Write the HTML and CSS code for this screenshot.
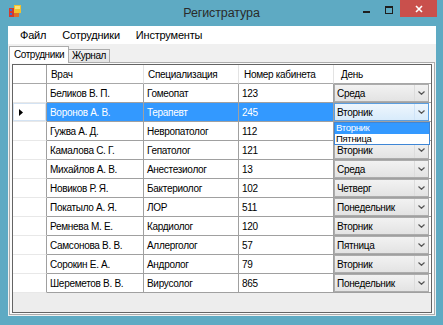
FILE: index.html
```html
<!DOCTYPE html>
<html lang="ru">
<head>
<meta charset="utf-8">
<title>Регистратура</title>
<link rel="stylesheet" href="styles.css">
</head>
<body>
<div class="window">
  <div class="titlebar">
    <div class="tb-left">
      <svg class="app-icon" width="12" height="12" viewBox="0 0 12 12">
        <rect x="0" y="3" width="6" height="9" fill="#d43a2f"/>
        <rect x="1" y="4" width="2" height="2" fill="#3a6fd8"/>
        <rect x="1" y="8" width="2" height="2" fill="#3a6fd8"/>
        <rect x="5" y="0" width="7" height="8" fill="#f2c12e"/>
        <rect x="6" y="1" width="5" height="3" fill="#fbe27a"/>
        <rect x="5" y="8" width="5" height="4" fill="#e0702a"/>
      </svg>
    </div>
    <div class="title">Регистратура</div>
    <div class="controls">
      <div class="btn-min"></div>
      <div class="btn-max"></div>
      <div class="btn-close">
        <svg width="8" height="8" viewBox="0 0 8 8"><path d="M1 1L7 7M7 1L1 7" stroke="#fff" stroke-width="1.6"/></svg>
      </div>
    </div>
  </div>
  <div class="client">
    <div class="menubar">
      <span class="menu-item">Файл</span>
      <span class="menu-item">Сотрудники</span>
      <span class="menu-item">Инструменты</span>
    </div>
    <div class="tabstrip">
      <div class="tab tab-active">Сотрудники</div>
      <div class="tab">Журнал</div>
    </div>
    <div class="tabpanel">
      <div class="grid">
        <div class="row hdr">
          <div class="c rh"></div>
          <div class="c c1">Врач</div>
          <div class="c c2">Специализация</div>
          <div class="c c3">Номер кабинета</div>
          <div class="c c4 hday">День</div>
        </div>

        <div class="row">
          <div class="c rh"></div>
          <div class="c c1">Беликов В. П.</div>
          <div class="c c2">Гомеопат</div>
          <div class="c c3">123</div>
          <div class="c c4"><div class="combo"><span class="ctext">Среда</span><span class="cbtn"><svg width="7" height="4" viewBox="0 0 7 4"><path d="M0.5 0.5L3.5 3.3L6.5 0.5" fill="none" stroke="#555" stroke-width="1.2"/></svg></span></div></div>
        </div>

        <div class="row sel">
          <div class="c rh rh-cur"><svg width="4" height="7" viewBox="0 0 4 7"><path d="M0 0L4 3.5L0 7Z" fill="#000"/></svg></div>
          <div class="c c1">Воронов А. В.</div>
          <div class="c c2">Терапевт</div>
          <div class="c c3">245</div>
          <div class="c c4"><div class="combo combo-active"><span class="ctext">Вторник</span><span class="cbtn"><svg width="7" height="4" viewBox="0 0 7 4"><path d="M0.5 0.5L3.5 3.3L6.5 0.5" fill="none" stroke="#555" stroke-width="1.2"/></svg></span></div></div>
        </div>

        <div class="row">
          <div class="c rh"></div>
          <div class="c c1">Гужва А. Д.</div>
          <div class="c c2">Невропатолог</div>
          <div class="c c3">112</div>
          <div class="c c4"><div class="combo"><span class="cbtn cbtn-end"><svg width="7" height="4" viewBox="0 0 7 4"><path d="M0.5 0.5L3.5 3.3L6.5 0.5" fill="none" stroke="#555" stroke-width="1.2"/></svg></span></div></div>
        </div>

        <div class="row">
          <div class="c rh"></div>
          <div class="c c1">Камалова С. Г.</div>
          <div class="c c2">Гепатолог</div>
          <div class="c c3">121</div>
          <div class="c c4"><div class="combo"><span class="ctext">Вторник</span><span class="cbtn"><svg width="7" height="4" viewBox="0 0 7 4"><path d="M0.5 0.5L3.5 3.3L6.5 0.5" fill="none" stroke="#555" stroke-width="1.2"/></svg></span></div></div>
        </div>

        <div class="row">
          <div class="c rh"></div>
          <div class="c c1">Михайлов А. В.</div>
          <div class="c c2">Анестезиолог</div>
          <div class="c c3">13</div>
          <div class="c c4"><div class="combo"><span class="ctext">Среда</span><span class="cbtn"><svg width="7" height="4" viewBox="0 0 7 4"><path d="M0.5 0.5L3.5 3.3L6.5 0.5" fill="none" stroke="#555" stroke-width="1.2"/></svg></span></div></div>
        </div>

        <div class="row">
          <div class="c rh"></div>
          <div class="c c1">Новиков Р. Я.</div>
          <div class="c c2">Бактериолог</div>
          <div class="c c3">102</div>
          <div class="c c4"><div class="combo"><span class="ctext">Четверг</span><span class="cbtn"><svg width="7" height="4" viewBox="0 0 7 4"><path d="M0.5 0.5L3.5 3.3L6.5 0.5" fill="none" stroke="#555" stroke-width="1.2"/></svg></span></div></div>
        </div>

        <div class="row">
          <div class="c rh"></div>
          <div class="c c1">Покатыло А. Я.</div>
          <div class="c c2">ЛОР</div>
          <div class="c c3">511</div>
          <div class="c c4"><div class="combo"><span class="ctext">Понедельник</span><span class="cbtn"><svg width="7" height="4" viewBox="0 0 7 4"><path d="M0.5 0.5L3.5 3.3L6.5 0.5" fill="none" stroke="#555" stroke-width="1.2"/></svg></span></div></div>
        </div>

        <div class="row">
          <div class="c rh"></div>
          <div class="c c1">Ремнева М. Е.</div>
          <div class="c c2">Кардиолог</div>
          <div class="c c3">120</div>
          <div class="c c4"><div class="combo"><span class="ctext">Вторник</span><span class="cbtn"><svg width="7" height="4" viewBox="0 0 7 4"><path d="M0.5 0.5L3.5 3.3L6.5 0.5" fill="none" stroke="#555" stroke-width="1.2"/></svg></span></div></div>
        </div>

        <div class="row">
          <div class="c rh"></div>
          <div class="c c1">Самсонова В. В.</div>
          <div class="c c2">Аллерголог</div>
          <div class="c c3">57</div>
          <div class="c c4"><div class="combo"><span class="ctext">Пятница</span><span class="cbtn"><svg width="7" height="4" viewBox="0 0 7 4"><path d="M0.5 0.5L3.5 3.3L6.5 0.5" fill="none" stroke="#555" stroke-width="1.2"/></svg></span></div></div>
        </div>

        <div class="row">
          <div class="c rh"></div>
          <div class="c c1">Сорокин Е. А.</div>
          <div class="c c2">Андролог</div>
          <div class="c c3">79</div>
          <div class="c c4"><div class="combo"><span class="ctext">Вторник</span><span class="cbtn"><svg width="7" height="4" viewBox="0 0 7 4"><path d="M0.5 0.5L3.5 3.3L6.5 0.5" fill="none" stroke="#555" stroke-width="1.2"/></svg></span></div></div>
        </div>

        <div class="row">
          <div class="c rh"></div>
          <div class="c c1">Шереметов В. В.</div>
          <div class="c c2">Вирусолог</div>
          <div class="c c3">865</div>
          <div class="c c4"><div class="combo"><span class="ctext">Понедельник</span><span class="cbtn"><svg width="7" height="4" viewBox="0 0 7 4"><path d="M0.5 0.5L3.5 3.3L6.5 0.5" fill="none" stroke="#555" stroke-width="1.2"/></svg></span></div></div>
        </div>

        <div class="dropdown">
          <div class="opt opt-sel">Вторник</div>
          <div class="opt">Пятница</div>
        </div>
      </div>
    </div>
  </div>
</div>
</body>
</html>
```

FILE: styles.css
```css
* { box-sizing: border-box; }

html, body {
  margin: 0;
  padding: 0;
}

body {
  width: 443px;
  height: 325px;
  overflow: hidden;
  background: #5eaac3;
  font-family: "Liberation Sans", Arial, sans-serif;
  color: #000;
}

.window {
  display: flex;
  flex-direction: column;
  width: 443px;
  height: 325px;
}

/* ---------- title bar ---------- */
.titlebar {
  height: 26px;
  flex: none;
  display: grid;
  grid-template-columns: 1fr auto 1fr;
  align-items: start;
}

.tb-left {
  padding: 5px 0 0 9px;
}

.app-icon { display: block; }

.title {
  padding-top: 5px;
  font-size: 12.5px;
  line-height: 16px;
  color: #2a2a2a;
  letter-spacing: -0.1px;
}

.controls {
  justify-self: end;
  display: flex;
  align-items: flex-start;
  padding-right: 6px;
}

.btn-min {
  width: 7px;
  height: 2px;
  margin-top: 11px;
  background: #1e1e1e;
}

.btn-max {
  width: 8px;
  height: 8px;
  margin-top: 6px;
  margin-left: 15px;
  border: 1px solid #1e1e1e;
  border-top-width: 2px;
}

.btn-close {
  width: 37px;
  height: 17px;
  margin-left: 7px;
  background: #c9504c;
  display: flex;
  align-items: center;
  justify-content: center;
}

.btn-close svg { display: block; }

/* ---------- client ---------- */
.client {
  flex: 1;
  margin: 0 7px 9px 8px;
  background: #f0f0f0;
  display: flex;
  flex-direction: column;
}

.menubar {
  height: 18px;
  flex: none;
  background: #fff;
  display: flex;
  align-items: center;
  padding-left: 12px;
  gap: 16px;
  font-size: 11px;
  letter-spacing: -0.2px;
}

.tabstrip {
  height: 18px;
  flex: none;
  display: flex;
  align-items: flex-end;
  padding-left: 1px;
  position: relative;
  z-index: 1;
}

.tab {
  height: 13px;
  width: 42px;
  margin-left: -1px;
  border: 1px solid #acacac;
  border-bottom: none;
  background: linear-gradient(#f2f2f2, #e4e4e4);
  font-size: 10px;
  letter-spacing: -0.4px;
  line-height: 12px;
  text-align: center;
}

.tab-active {
  height: 17px;
  width: 60px;
  margin-left: 0;
  margin-bottom: -1px;
  background: #fff;
  line-height: 15px;
}

.tabpanel {
  flex: 1;
  margin: 0 1px 1px 1px;
  border: 1px solid #acacac;
  background: #fbfbfb;
  padding: 1px 2px 1px 2px;
}

/* ---------- grid ---------- */
.grid {
  position: relative;
  width: 420px;
  height: 249px;
  border: 1px solid #646464;
  background: #ededed;
  font-size: 10px;
  letter-spacing: -0.3px;
}

.row {
  display: flex;
  height: 19px;
}

.c {
  height: 19px;
  flex: none;
  display: flex;
  align-items: center;
  padding-left: 3px;
  white-space: nowrap;
  overflow: hidden;
  background: #fff;
  border-right: 1px solid #a0a0a0;
  border-bottom: 1px solid #a0a0a0;
}

.rh {
  width: 34px;
  padding-left: 6px;
  border-bottom-color: #e8e8e8;
}

.c1 { width: 97px; }
.c2 { width: 95px; }
.c3 { width: 95px; }
.c4 {
  width: 97px;
  border-right: none;
  padding: 0;
}

.hdr .c {
  padding-left: 4px;
  border-right-color: #e3e3e3;
  border-bottom-color: #a8a8a8;
}

.hdr .rh { border-right-color: #a0a0a0; }
.hdr .c3 { padding-left: 5px; }
.hdr .hday { padding-left: 7px; }

.sel .c1, .sel .c2, .sel .c3 {
  background: #3399ff;
  color: #fff;
}

.rh-cur {
  box-shadow: inset 0 0 0 1px #d4e3f3;
}

.rh svg { display: block; }

/* ---------- combo cells ---------- */
.combo {
  width: 95px;
  height: 18px;
  display: flex;
  align-items: center;
  border: 1px solid #acacac;
  background: linear-gradient(#f2f2f2, #e3e3e3);
}

.ctext {
  flex: 1;
  padding-left: 2px;
}

.cbtn {
  width: 14px;
  height: 16px;
  border-left: 1px solid #dcdcdc;
  display: flex;
  align-items: center;
  justify-content: center;
}

.cbtn-end { margin-left: auto; }

.cbtn svg { display: block; }

.combo-active {
  border-color: #5a9ee0;
  background: linear-gradient(#eef6fd, #d8ebfb);
}

.combo-active .cbtn { border-left-color: #cfe3f7; }

.dropdown {
  position: absolute;
  left: 321px;
  top: 57px;
  width: 96px;
  height: 23px;
  border: 1px solid #3e86d6;
  background: #fff;
}

.opt {
  height: 10.5px;
  line-height: 10.5px;
  padding-left: 1px;
  font-size: 9.5px;
  overflow: hidden;
}

.opt-sel {
  background: #3399ff;
  color: #fff;
}
```
